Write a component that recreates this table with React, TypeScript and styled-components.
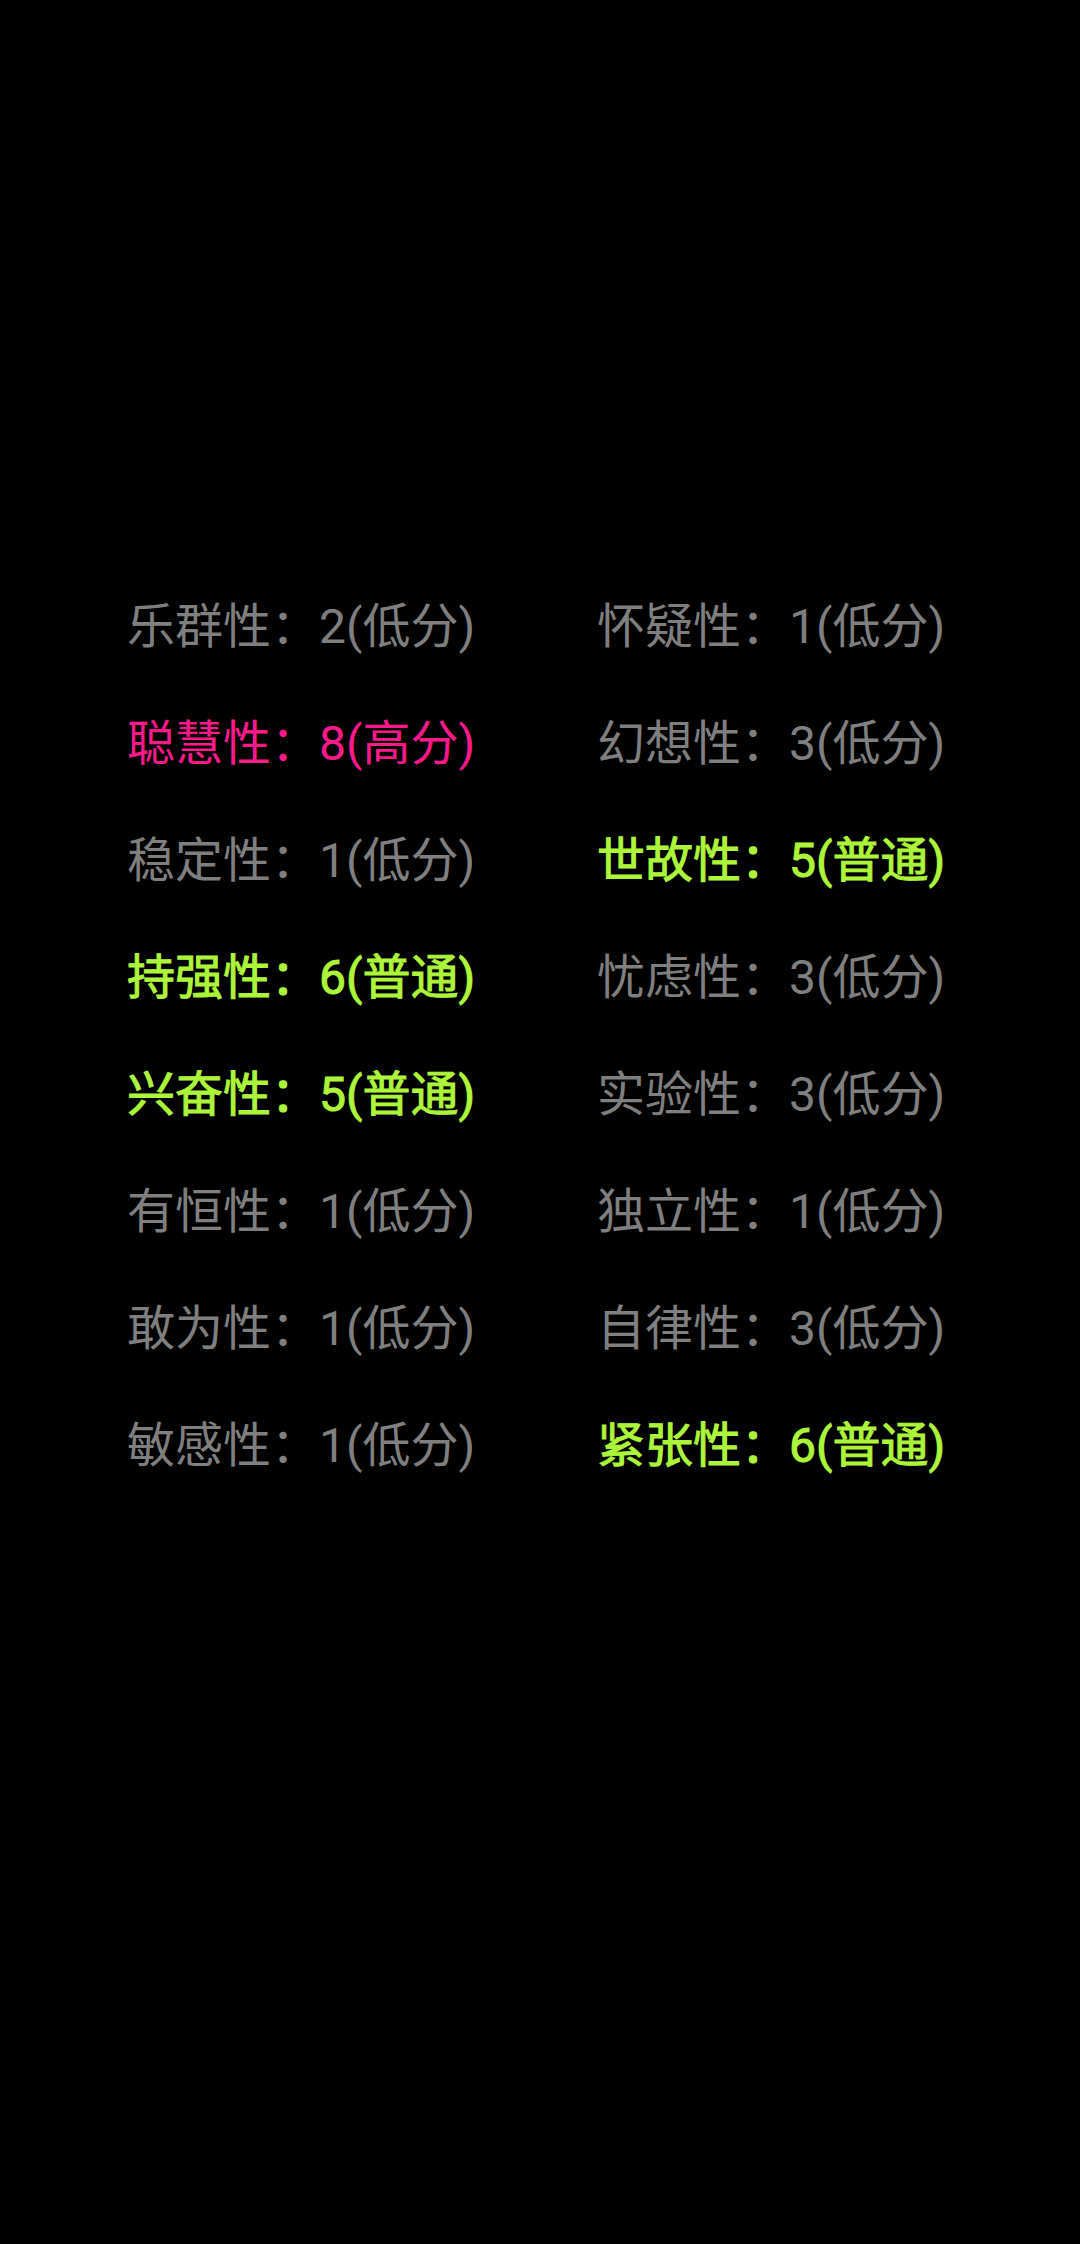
import React from "react";
import styled, { createGlobalStyle } from "styled-components";

const Global = createGlobalStyle`
  html, body {
    margin: 0;
    padding: 0;
    background: #000;
  }
  body {
    font-family: Roboto, "Noto Sans CJK SC", sans-serif;
  }
`;

const Screen = styled.div`
  width: 1080px;
  height: 2244px;
  background: #000;
  box-sizing: border-box;
  padding: 568px 0 0 127px;
`;

const Grid = styled.div`
  display: grid;
  grid-template-columns: 470px 470px;
  grid-auto-rows: 117px;
  align-items: center;
`;

type Level = "low" | "mid" | "high";

const Trait = styled.div<{ $level: Level }>`
  font-family: Roboto, "Noto Sans CJK SC", sans-serif;
  font-size: 48px;
  line-height: 1;
  white-space: nowrap;
  color: ${(p) =>
    p.$level === "high" ? "#ff1a8c" : p.$level === "mid" ? "#adf53a" : "#7f7f7f"};
  font-weight: 400;
  -webkit-text-stroke: ${(p) => (p.$level === "mid" ? "1px currentColor" : "0")};
`;

const items: [string, number, Level][] = [
  ["乐群性", 2, "low"],
  ["怀疑性", 1, "low"],
  ["聪慧性", 8, "high"],
  ["幻想性", 3, "low"],
  ["稳定性", 1, "low"],
  ["世故性", 5, "mid"],
  ["持强性", 6, "mid"],
  ["忧虑性", 3, "low"],
  ["兴奋性", 5, "mid"],
  ["实验性", 3, "low"],
  ["有恒性", 1, "low"],
  ["独立性", 1, "low"],
  ["敢为性", 1, "low"],
  ["自律性", 3, "low"],
  ["敏感性", 1, "low"],
  ["紧张性", 6, "mid"],
];

const label: Record<Level, string> = { low: "低分", mid: "普通", high: "高分" };

export default function App() {
  return (
    <>
      <Global />
      <Screen>
        <Grid>
          {items.map(([name, score, level]) => (
            <Trait key={name} $level={level}>
              {name}：{score}({label[level]})
            </Trait>
          ))}
        </Grid>
      </Screen>
    </>
  );
}
